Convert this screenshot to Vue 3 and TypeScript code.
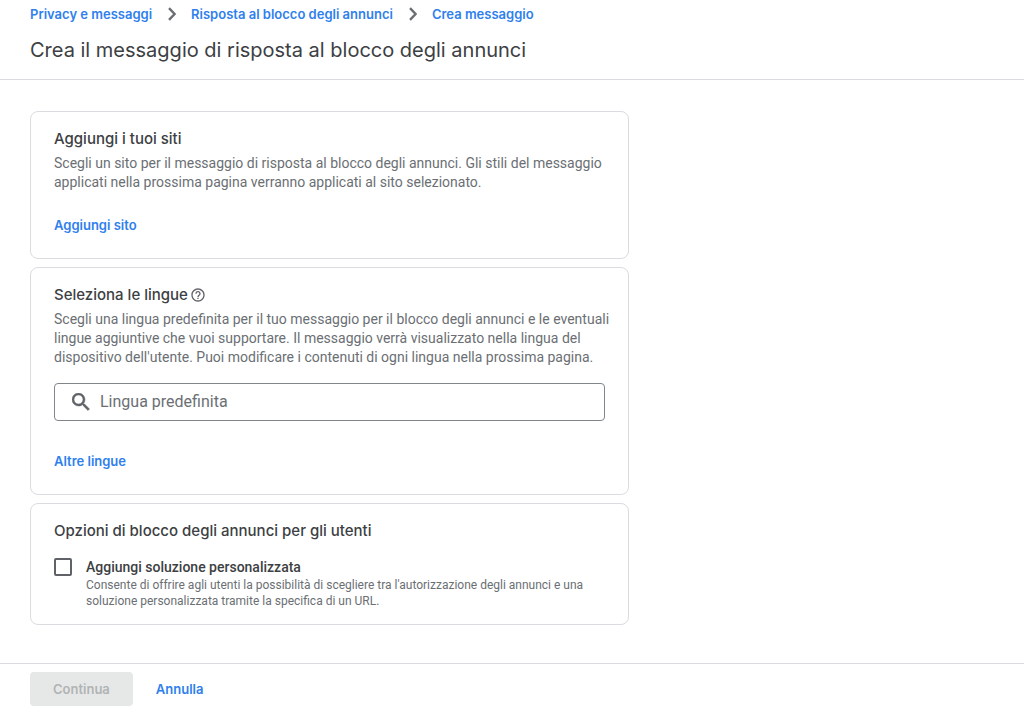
<script setup lang="ts">
import { ref } from 'vue'

interface Crumb {
  label: string
  href: string
}

const crumbs: Crumb[] = [
  { label: 'Privacy e messaggi', href: '#privacy' },
  { label: 'Risposta al blocco degli annunci', href: '#risposta' },
  { label: 'Crea messaggio', href: '#crea' },
]

const language = ref('')
const customChoice = ref(false)
</script>

<template>
  <div class="page">
    <header class="header">
      <nav class="crumbs" aria-label="Percorso">
        <template v-for="(crumb, i) in crumbs" :key="crumb.label">
          <svg v-if="i > 0" class="chevron" viewBox="0 0 8 14" aria-hidden="true">
            <path d="M1 1.2 6.6 7 1 12.8" fill="none" stroke="#6b6e72" stroke-width="2.4" />
          </svg>
          <a class="crumb" :href="crumb.href">{{ crumb.label }}</a>
        </template>
      </nav>
      <h1 class="title">Crea il messaggio di risposta al blocco degli annunci</h1>
    </header>

    <main class="content">
      <section class="card">
        <h2 class="heading">Aggiungi i tuoi siti</h2>
        <p class="text">
          Scegli un sito per il messaggio di risposta al blocco degli annunci. Gli stili del messaggio<br />
          applicati nella prossima pagina verranno applicati al sito selezionato.
        </p>
        <button class="link add-site" type="button">Aggiungi sito</button>
      </section>

      <section class="card">
        <h2 class="heading">
          <label for="language">Seleziona le lingue</label>
          <button class="help" type="button" aria-label="Guida">
            <svg viewBox="0 0 24 24" aria-hidden="true">
              <path
                fill="#5f6368"
                d="M11 18h2v-2h-2v2zm1-16C6.48 2 2 6.48 2 12s4.48 10 10 10 10-4.48 10-10S17.52 2 12 2zm0 18c-4.41 0-8-3.59-8-8s3.59-8 8-8 8 3.59 8 8-3.59 8-8 8zm0-14c-2.21 0-4 1.79-4 4h2c0-1.1.9-2 2-2s2 .9 2 2c0 2-3 1.75-3 5h2c0-2.25 3-2.5 3-5 0-2.21-1.79-4-4-4z"
              />
            </svg>
          </button>
        </h2>
        <p class="text">
          Scegli una lingua predefinita per il tuo messaggio per il blocco degli annunci e le eventuali<br />
          lingue aggiuntive che vuoi supportare. Il messaggio verrà visualizzato nella lingua del<br />
          dispositivo dell'utente. Puoi modificare i contenuti di ogni lingua nella prossima pagina.
        </p>
        <div class="search">
          <svg class="search-icon" viewBox="3 3 18 18" aria-hidden="true">
            <path
              fill="#5f6368"
              stroke="#5f6368"
              stroke-width="0.5"
              d="M15.5 14h-.79l-.28-.27A6.471 6.471 0 0 0 16 9.5 6.5 6.5 0 1 0 9.5 16c1.61 0 3.09-.59 4.23-1.57l.27.28v.79l5 4.99L20.49 19l-4.99-5zm-6 0C7.01 14 5 11.99 5 9.5S7.01 5 9.5 5 14 7.01 14 9.5 11.99 14 9.5 14z"
            />
          </svg>
          <input id="language" v-model="language" class="field" type="text" placeholder="Lingua predefinita" />
        </div>
        <button class="link more" type="button">Altre lingue</button>
      </section>

      <section class="card options">
        <h2 class="heading">Opzioni di blocco degli annunci per gli utenti</h2>
        <div class="option">
          <input id="custom" v-model="customChoice" class="box" type="checkbox" aria-describedby="custom-note" />
          <div>
            <label class="option-label" for="custom">Aggiungi soluzione personalizzata</label>
            <p id="custom-note" class="note">
              Consente di offrire agli utenti la possibilità di scegliere tra l'autorizzazione degli annunci e una<br />
              soluzione personalizzata tramite la specifica di un URL.
            </p>
          </div>
        </div>
      </section>
    </main>

    <footer class="footer">
      <button class="primary" type="button" disabled>Continua</button>
      <button class="link" type="button">Annulla</button>
    </footer>
  </div>
</template>

<style>
body {
  margin: 0;
  background: #fff;
}
</style>

<style scoped>
.page {
  display: flex;
  flex-direction: column;
  min-height: 100vh;
  font-family: Roboto, "Liberation Sans", sans-serif;
  color: #3c4043;
}
.header {
  padding: 4px 30px 15px;
  border-bottom: 1px solid #dadce0;
}
.crumbs {
  display: flex;
  align-items: center;
}
.crumb,
.link,
.primary {
  font: 600 13px/20px Inter, "Liberation Sans", sans-serif;
}
.crumb {
  color: #2f80ed;
  text-decoration: none;
}
.chevron {
  width: 8px;
  height: 14px;
  margin: 0 15px 0 16px;
}
.title {
  margin: 12px 0 0;
  font: 400 20px/28px Inter, "Liberation Sans", sans-serif;
}
.content {
  display: flex;
  flex: 1;
  flex-direction: column;
  gap: 8px;
  padding: 31px 30px 38px;
}
.card {
  box-sizing: border-box;
  width: 100%;
  max-width: 599px;
  padding: 17px 23px 23px;
  border: 1px solid #dadce0;
  border-radius: 8px;
}
.heading {
  display: flex;
  align-items: center;
  margin: 0;
  font: 500 15px/20px Inter, "Liberation Sans", sans-serif;
}
.text {
  margin: 5px 0 0;
  font-size: 14px;
  line-height: 19px;
  color: #6b6f74;
  white-space: nowrap;
}
.link {
  display: block;
  padding: 0;
  border: 0;
  background: none;
  color: #2f80ed;
  cursor: pointer;
}
.add-site {
  margin-top: 23px;
}
.help {
  display: flex;
  margin-left: 2px;
  padding: 0;
  border: 0;
  background: none;
}
.help svg {
  width: 16px;
  height: 16px;
}
.search {
  display: flex;
  align-items: center;
  gap: 10px;
  height: 36px;
  margin-top: 16px;
  padding: 0 17px;
  border: 1px solid #80868b;
  border-radius: 4px;
}
.search-icon {
  flex: none;
  width: 18px;
  height: 18px;
}
.field {
  flex: 1;
  min-width: 0;
  padding: 0;
  border: 0;
  outline: 0;
  background: none;
  font: 400 16px/20px Roboto, "Liberation Sans", sans-serif;
  color: #3c4043;
}
.field::placeholder {
  color: #6b6f74;
  opacity: 1;
}
.more {
  margin-top: 30px;
}
.options {
  padding-bottom: 15px;
}
.option {
  display: flex;
  align-items: flex-start;
  gap: 14px;
  margin-top: 17px;
}
.box {
  flex: none;
  appearance: none;
  width: 18px;
  height: 18px;
  margin: 0;
  border: 2px solid #5f6368;
  border-radius: 2px;
}
.box:checked {
  border-color: #2f80ed;
  background: #2f80ed;
}
.option-label {
  display: block;
  font-size: 14px;
  font-weight: 500;
  line-height: 19px;
}
.note {
  margin: 0;
  font-size: 12px;
  line-height: 16px;
  color: #6b6f74;
  white-space: nowrap;
}
.footer {
  display: flex;
  align-items: center;
  gap: 23px;
  padding: 8px 30px 11px;
  border-top: 1px solid #dadce0;
}
.primary {
  padding: 7px 23px;
  border: 0;
  border-radius: 4px;
  background: #e6e8e7;
  color: #b1b4b4;
}
</style>
